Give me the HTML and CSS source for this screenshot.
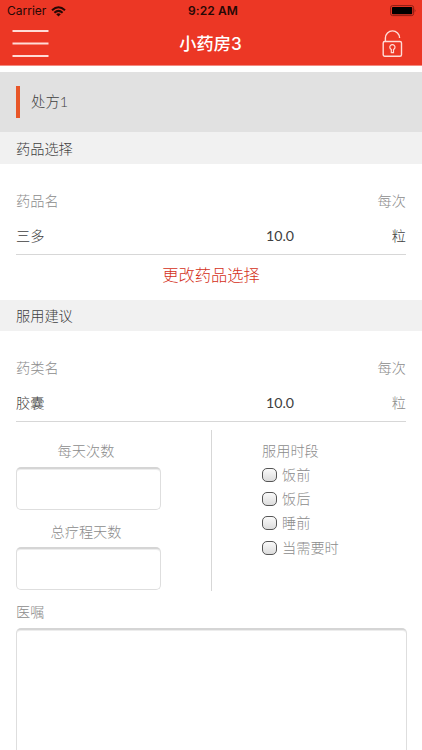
FILE: index.html
```html
<!DOCTYPE html>
<html lang="zh-CN">
<head>
<meta charset="utf-8">
<title>小药房3</title>
<link rel="stylesheet" href="styles.css">
</head>
<body>
<header class="header">
  <div class="status">
    <div class="carrier"><span>Carrier</span>
      <svg class="wifi" width="15" height="11" viewBox="0 0 15 11" fill="none" stroke="#260805" stroke-width="2"><path d="M1 4.2Q7.5-1.8 14 4.2M3.4 6.7Q7.5 3 11.6 6.7"/><path d="M5.2 8.2Q7.5 6.4 9.8 8.2L7.5 10.6Z" fill="#260805" stroke="none"/></svg>
    </div>
    <span class="clock">9:22 AM</span>
    <svg class="battery" width="27" height="12" viewBox="0 0 27 12"><rect x=".6" y=".6" width="23" height="10" rx="2" fill="none" stroke="#8b1d14"/><rect x="2" y="2" width="20.2" height="7.2" rx=".7" fill="#000"/><path d="M24.7 3.7q1.7 1.9 0 3.8z" fill="#8b1d14"/></svg>
  </div>
  <nav class="navbar">
    <svg class="menu" width="37" height="28" viewBox="0 0 37 28" stroke="#ffdcd7" stroke-width="1.8"><path d="M.5 1h36M.5 13.5h36M.5 26h36"/></svg>
    <h1>小药房3</h1>
    <svg class="lock" width="21" height="28" viewBox="0 0 21 28" fill="none" stroke="#ffdcd7" stroke-width="1.4"><rect x="1.2" y="11.5" width="18.3" height="14.7" rx="1.5"/><path d="M3.4 11.5V8a7.1 7.1 0 0 1 14.2 0"/><path stroke-width="1.2" d="M9.3 19.5a2.6 2.6 0 1 1 2.2 0v3.2H9.3z"/></svg>
  </nav>
</header>
<main>
  <section class="prescription"><span class="marker"></span><span>处方1</span></section>
  <h2>药品选择</h2>
  <section class="table">
    <div class="row head"><span>药品名</span><span></span><span>每次</span></div>
    <div class="row"><span>三多</span><span class="amount">10.0</span><span>粒</span></div>
  </section>
  <a class="change">更改药品选择</a>
  <h2 class="suggestion">服用建议</h2>
  <section class="table">
    <div class="row head"><span>药类名</span><span></span><span>每次</span></div>
    <div class="row"><span>胶囊</span><span class="amount">10.0</span><span class="muted">粒</span></div>
  </section>
  <section class="dosage">
    <div class="fields">
      <label for="times">每天次数</label><input id="times" class="box">
      <label for="days">总疗程天数</label><input id="days" class="box">
    </div>
    <div class="periods">
      <div>服用时段</div>
      <label><input type="checkbox">饭前</label>
      <label><input type="checkbox">饭后</label>
      <label><input type="checkbox">睡前</label>
      <label><input type="checkbox">当需要时</label>
    </div>
  </section>
  <section class="advice"><label for="advice">医嘱</label><textarea id="advice" class="box"></textarea></section>
</main>
</body>
</html>
```
FILE: styles.css
```css
* { box-sizing: border-box; }
body { margin: 0; background: #fff; color: #404040; font: 300 14.2px/20px Lato, "Noto Sans CJK SC", sans-serif; }
.header { height: 66px; background: #ec3725; border-bottom: 1px solid #f38a80; }
.status { height: 22px; padding: 0 5px 0 7px; display: grid; grid-template-columns: 1fr auto 1fr; align-items: center; color: #260805; font: 12px/22px Inter, sans-serif; }
.carrier { display: flex; align-items: center; gap: 5px; }
.clock { font-weight: 600; letter-spacing: .1px; margin-left: 2px; }
.battery { justify-self: end; }
.navbar { height: 43px; padding: 0 19px 0 12px; display: grid; grid-template-columns: 1fr auto 1fr; align-items: center; }
.navbar h1 { margin: 0 0 0 6px; color: #fff; font: 500 17.2px/24px Inter, "Noto Sans CJK SC", sans-serif; }
.lock { justify-self: end; }
.prescription { height: 60px; margin-top: 6px; padding-left: 16px; display: flex; align-items: center; gap: 11px; background: #e1e1e1; font-size: 14.4px; }
.marker { width: 4px; height: 32px; background: #e85628; }
h2 { height: 32px; margin: 0; padding-left: 16px; background: #f1f1f1; font-size: 14.2px; font-weight: 300; line-height: 34px; }
.suggestion { height: 31px; line-height: 32px; }
.table { height: 91px; margin: 0 16px; padding-top: 27px; border-bottom: 1px solid #d7d7d7; }
.row { height: 35px; display: grid; grid-template-columns: 250px 60px 1fr; line-height: 20px; }
.row span:last-child { text-align: right; }
.amount { font-weight: 400; }
.head, .row .muted, .dosage, .advice { color: #8c8c8c; }
.change { height: 45px; display: block; color: #d42f20; font-size: 16.3px; line-height: 39px; text-align: center; }
.dosage { margin: 8px 16px 0; height: 161px; display: grid; grid-template-columns: 196px 1fr; }
.fields { height: 161px; display: flex; flex-direction: column; padding: 11px 50px 0 0; border-right: 1px solid #d7d7d7; }
.fields label { text-align: center; margin-right: 5px; }
.box { display: block; border: 1px solid #dedede; border-top: 2px solid #d5d5d5; border-radius: 5px; outline: 0; background: #fff; box-shadow: inset 0 1px #ededed; }
.fields .box { width: 145px; height: 43px; margin: 6px 0 12px; flex-shrink: 0; }
.fields .box:last-child { margin-bottom: 0; height: 43px; margin-top: 5px; }
.periods { padding: 11px 0 0 50px; }
.periods label { height: 24.4px; display: flex; align-items: center; gap: 5px; }
.periods div { height: 21.5px; }
.periods input { appearance: none; width: 15px; height: 14px; margin: 0; border: 1px solid #555; border-radius: 5px; background: linear-gradient(#fafafa, #dcdcdc); }
.advice { padding: 11px 16px 0; }
.advice .box { width: 391px; height: 122px; margin-top: 6px; resize: none; border-bottom: 0; border-radius: 5px 5px 0 0; }
```
